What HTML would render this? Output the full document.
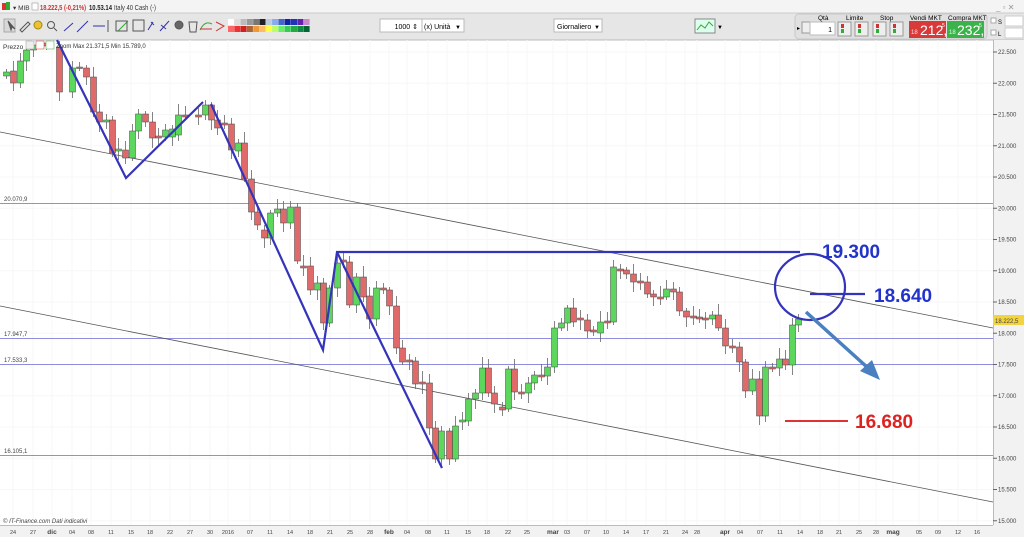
<!DOCTYPE html>
<html><head><meta charset="utf-8"><style>
body{margin:0;width:1024px;height:537px;overflow:hidden;background:#fff;font-family:"Liberation Sans",sans-serif;}
</style></head><body>
<svg id="s" width="1024" height="537" xmlns="http://www.w3.org/2000/svg" style="position:absolute;left:0;top:0;font-family:'Liberation Sans',sans-serif">
<rect x="0" y="0" width="1024" height="13" fill="#f4f4f4"/>
<rect x="0" y="13" width="1024" height="27" fill="#e6e6e6"/>
<line x1="0" y1="13" x2="1024" y2="13" stroke="#ccc"/>
<line x1="0" y1="40" x2="1024" y2="40" stroke="#bbb"/>
<rect x="2" y="3" width="8" height="7" fill="#d33"/><rect x="6" y="2" width="4" height="8" fill="#3a3"/>
<text x="13" y="10" font-size="6.5" fill="#333">▾ MIB</text>
<rect x="32" y="3" width="6" height="7" fill="#fff" stroke="#999" stroke-width=".6"/>
<text x="40" y="10" font-size="7" font-weight="bold" fill="#c33" textLength="46" lengthAdjust="spacingAndGlyphs">18.222,5 (-0,21%)</text>
<text x="89" y="10" font-size="7" font-weight="bold" fill="#222" textLength="23" lengthAdjust="spacingAndGlyphs">10.53.14</text>
<text x="114" y="10" font-size="7" fill="#333" textLength="42" lengthAdjust="spacingAndGlyphs">Italy 40 Cash (-)</text>
<text x="996" y="10" font-size="8" fill="#999">_ ▫ ✕</text>
<g fill="none" stroke="#555" stroke-width="1">
<rect x="4" y="19" width="11" height="13" fill="#d8d8d8" stroke="#aaa"/>
<path d="M8 21 l3 9 1-3 3 2z" fill="#555"/>
<path d="M20 30 l8-8 2 2-8 8z"/>
<circle cx="38" cy="25" r="4" fill="#e9c23a" stroke="#a80"/>
<circle cx="51" cy="25" r="3.5"/><path d="M54 28 l3 3"/>
<path d="M64 31 l9-8" stroke="#33a"/><path d="M77 32 l11-11" stroke="#33a"/>
<path d="M93 26 h12" stroke="#33a"/><path d="M108 20 v12"/>
<path d="M118 31 l10-10" stroke="#3a3"/><rect x="116" y="21" width="11" height="10"/>
<rect x="133" y="20" width="11" height="11"/>
<path d="M148 30 l5-8 M151 22 l3 3" stroke="#33a"/><path d="M160 31 l9-10 M161 25 l5 4" stroke="#33a"/>
<circle cx="179" cy="25" r="4" fill="#666"/><path d="M189 22 h8 l-1 10 h-6z"/>
<path d="M200 30 c4-8 8-8 12-6" stroke="#3a3"/><path d="M200 29 h12" stroke="#c33"/>
<path d="M216 22 l8 4-8 5" stroke="#c33"/>
</g>
<g id="pal"></g>
<rect x="380" y="19" width="42" height="13" fill="#fff" stroke="#bbb"/><text x="418" y="29" font-size="7" text-anchor="end">1000 ⇕</text>
<rect x="422" y="19" width="42" height="13" fill="#fff" stroke="#bbb"/><text x="424" y="29" font-size="7">(x) Unità</text><text x="455" y="29" font-size="6">▼</text>
<rect x="554" y="19" width="48" height="13" fill="#fff" stroke="#bbb"/><text x="557" y="29" font-size="7">Giornaliero</text><text x="594" y="29" font-size="6">▼</text>
<rect x="695" y="19" width="20" height="14" fill="#dfe" stroke="#888"/><path d="M697 30 l4-5 4 3 4-6 4 4" stroke="#3a3" fill="none"/><text x="717" y="29" font-size="6">▼</text>
<rect x="795" y="14" width="192" height="25" rx="4" fill="#e0e0e0" stroke="#c8c8c8"/>
<text x="797" y="30" font-size="6">▸</text><rect x="802" y="22" width="10" height="11" fill="#eee" stroke="#999"/>
<text x="818" y="20" font-size="6.5">Qtà</text><rect x="810" y="22" width="25" height="13" fill="#fff" stroke="#bbb"/><text x="832" y="32" font-size="7" text-anchor="end">1</text>
<text x="846" y="20" font-size="6.5">Limite</text><text x="880" y="20" font-size="6.5">Stop</text>
<g fill="#eee" stroke="#999"><rect x="838" y="22" width="13" height="14"/><rect x="855" y="22" width="13" height="14"/><rect x="873" y="22" width="13" height="14"/><rect x="890" y="22" width="13" height="14"/></g>
<g fill="#c33"><rect x="841" y="24" width="3" height="4"/><rect x="858" y="24" width="3" height="4"/><rect x="876" y="24" width="3" height="4"/><rect x="893" y="24" width="3" height="4"/></g>
<g fill="#3a3"><rect x="841" y="29" width="3" height="4"/><rect x="858" y="29" width="3" height="4"/><rect x="876" y="29" width="3" height="4"/><rect x="893" y="29" width="3" height="4"/></g>
<text x="910" y="20" font-size="6.5">Vendi MKT</text><text x="948" y="20" font-size="6.5">Compra MKT</text>
<rect x="909" y="21" width="37" height="17" fill="#d83a3a"/><text x="911" y="34" font-size="6" fill="#fdd">18</text><text x="920" y="35" font-size="14" fill="#fff">212,</text><text x="942" y="27" font-size="5" fill="#fff">5</text>
<rect x="947" y="21" width="37" height="17" fill="#3bb24a"/><text x="949" y="34" font-size="6" fill="#dfd">18</text><text x="957" y="35" font-size="14" fill="#fff">232,</text><text x="979" y="27" font-size="5" fill="#fff">5</text>
<rect x="991" y="18" width="5" height="5" fill="#fff" stroke="#aaa"/><text x="998" y="24" font-size="6">S</text><rect x="1005" y="16" width="18" height="10" fill="#fff" stroke="#ccc"/>
<rect x="991" y="30" width="5" height="5" fill="#fff" stroke="#aaa"/><text x="998" y="36" font-size="6">L</text><rect x="1005" y="28" width="18" height="10" fill="#fff" stroke="#ccc"/>
<rect x="993" y="40" width="31" height="497" fill="#f2f2f2"/><line x1="993.5" y1="40" x2="993.5" y2="525" stroke="#bbb"/>
<rect x="0" y="525" width="993" height="12" fill="#f2f2f2"/><line x1="0" y1="525.5" x2="993" y2="525.5" stroke="#bbb"/>
<g id="grid"></g>
<g stroke="#6a6ad8" stroke-width="0.8">
<line x1="0" y1="203.5" x2="993" y2="203.5"/><line x1="0" y1="338.5" x2="993" y2="338.5"/>
<line x1="0" y1="364.5" x2="993" y2="364.5"/><line x1="0" y1="455.5" x2="993" y2="455.5"/></g>
<g font-size="6" fill="#444"><text x="4" y="201">20.070,9</text><text x="4" y="336">17.947,7</text><text x="4" y="362">17.533,3</text><text x="4" y="453">16.105,1</text></g>
<g stroke="#555" stroke-width="0.8"><line x1="0" y1="132" x2="993" y2="328"/><line x1="0" y1="306" x2="993" y2="502"/></g>
<g id="c"></g>
<g stroke="#3333bb" stroke-width="2.2" fill="none">
<polyline points="57,40 126,178 203,102"/><polyline points="211,104 323,350 337,252 800,252"/><line x1="337" y1="252" x2="442" y2="468"/>
<ellipse cx="810" cy="287" rx="35" ry="33"/><line x1="810" y1="294" x2="865" y2="294"/></g>
<line x1="785" y1="421" x2="848" y2="421" stroke="#d33" stroke-width="2"/>
<g stroke="#4a7fc0" stroke-width="3.5"><line x1="806" y1="312" x2="868" y2="368"/></g>
<path d="M880 380 L860 371 L872 360 Z" fill="#4a7fc0"/>
<g font-size="19" font-weight="bold"><text x="822" y="258" fill="#2233cc">19.300</text><text x="874" y="302" fill="#2233cc">18.640</text><text x="855" y="428" fill="#dd2222">16.680</text></g>
<text x="3" y="49" font-size="6.5" fill="#333">Prezzo</text>
<rect x="26" y="41" width="8" height="8" fill="#eee" stroke="#999" stroke-width=".5"/><rect x="36" y="41" width="8" height="8" fill="#fff" stroke="#c33" stroke-width=".5"/><rect x="46" y="41" width="8" height="8" fill="#fff" stroke="#3a3" stroke-width=".5"/>
<text x="56" y="48" font-size="6" fill="#333">Zoom Max 21.371,5 Min 15.789,0</text>
<text x="3" y="523" font-size="6" fill="#444" font-style="italic">© IT-Finance.com Dati indicativi</text>
<rect x="993" y="315" width="31" height="10" fill="#f3d43e"/>
<g id="ax" font-size="6" fill="#444"></g>
</svg>
<script>
var NS="http://www.w3.org/2000/svg";
function el(p,t,a,txt){var e=document.createElementNS(NS,t);for(var k in a)e.setAttribute(k,a[k]);if(txt!=null)e.textContent=txt;document.getElementById(p).appendChild(e);}
var cols1=["#fff","#ddd","#bbb","#999","#777","#222","#bcd","#8ae","#46c","#12a","#23b","#62a","#c8c"];
var cols2=["#f66","#e33","#c22","#a63","#e93","#fb6","#ff4","#bf6","#6e6","#3c5","#2a4","#184","#063"];
for(var i=0;i<13;i++){el("pal","rect",{x:228+i*6.3,y:19,width:6,height:6,fill:cols1[i]});el("pal","rect",{x:228+i*6.3,y:26,width:6,height:6,fill:cols2[i]});}
for(var p=15000;p<=22500;p+=500){var y=52+(22500-p)*0.0625;el("ax","line",{x1:993,y1:y,x2:997,y2:y,stroke:"#666"});
el("grid","line",{x1:0,y1:y,x2:993,y2:y,stroke:"#f7f7f7"});
var s=(p/1000).toFixed(3);el("ax","text",{x:998,y:y+2},s);}
el("ax","text",{x:995,y:323,"font-size":"6"},"18.222,5");
var d=[["24",13],["27",33],["dic",52],["04",72],["08",91],["11",111],["15",131],["18",150],["22",170],["27",190],["30",210],["2016",228],["07",250],["11",270],["14",290],["18",310],["21",330],["25",350],["28",370],["feb",389],["04",407],["08",428],["11",447],["15",468],["18",487],["22",508],["25",527],["mar",553],["03",567],["07",587],["10",606],["14",626],["17",646],["21",666],["24",685],["28",697],["apr",725],["04",740],["07",760],["11",780],["14",800],["18",820],["21",839],["25",859],["28",876],["mag",893],["05",919],["09",938],["12",958],["16",977]];
d.forEach(function(a){var b=isNaN(a[0]);el("ax","text",{x:a[1],y:534,"text-anchor":"middle","font-weight":b?"bold":"normal","font-size":b?"6.5":"5.5"},a[0]);
el("grid","line",{x1:a[1],y1:40,x2:a[1],y2:525,stroke:"#f7f7f7"});});
var C=[[6,72,76,1],[13,71,83,0],[20,61,83,1],[26,50,61,1],[33,45,50,1],[46,43,46,0],[59,47,92,0],[72,68,92,1],[79,67,68,0],[86,68,77,0],[93,77,112,0],[99,112,122,0],[106,120,122,1],[112,120,153,0],[118,149,151,1],[125,150,158,0],[132,131,158,1],[138,114,131,1],[145,114,122,0],[152,122,138,0],[158,136,138,0],[165,130,137,1],[172,129,137,1],[178,115,135,1],[185,115,117,0],[198,115,117,0],[205,105,115,1],[211,105,120,0],[217,120,128,0],[224,123,125,0],[231,124,150,0],[238,143,151,1],[244,143,179,0],[251,179,212,0],[257,212,225,0],[264,230,238,0],[270,213,238,1],[277,209,213,1],[283,209,223,0],[290,207,223,1],[297,207,261,0],[303,266,268,0],[310,266,290,0],[317,283,290,1],[323,283,323,0],[329,288,323,1],[337,263,288,1],[343,260,262,0],[349,262,305,0],[356,277,305,1],[363,277,297,0],[369,296,319,0],[376,288,319,1],[383,288,290,0],[389,290,306,0],[396,306,348,0],[402,348,362,0],[409,360,362,0],[415,361,384,0],[422,382,384,0],[429,383,428,0],[435,428,459,0],[441,431,459,1],[449,431,459,0],[455,426,459,1],[462,420,422,1],[468,399,421,1],[475,393,399,1],[482,368,393,1],[488,368,393,0],[494,393,404,0],[502,407,410,0],[508,369,409,1],[514,369,392,0],[521,392,394,0],[528,383,393,1],[534,375,383,1],[541,375,377,0],[547,367,376,1],[554,328,367,1],[561,323,328,1],[567,308,323,1],[573,308,322,0],[580,318,320,0],[587,320,331,0],[593,330,332,0],[600,322,333,1],[607,321,323,0],[613,267,322,1],[620,269,271,0],[626,270,274,0],[633,274,282,0],[640,281,283,0],[647,282,294,0],[653,294,297,0],[660,297,299,0],[666,289,297,1],[673,289,292,0],[679,292,311,0],[686,311,317,0],[693,316,318,0],[699,317,319,0],[705,318,320,0],[712,315,319,1],[718,315,328,0],[725,328,346,0],[732,346,348,0],[739,347,362,0],[745,362,391,0],[752,379,391,1],[759,379,416,0],[765,367,416,1],[772,367,369,0],[779,359,368,1],[785,359,365,0],[792,325,365,1],[798,319,325,1]];
C.forEach(function(c,i){var h=(c[2]-c[1]);var wt=c[1]-3-(i*7%9),wb=c[2]+3+(i*5%8);
el("c","line",{x1:c[0]+.5,y1:Math.max(wt,41),x2:c[0]+.5,y2:wb,stroke:"#666","stroke-width":"0.8"});
el("c","rect",{x:c[0]-2.5,y:Math.max(c[1],41),width:6,height:Math.max(h,1.5),fill:c[3]?"#5cd65c":"#e06a6a",stroke:"#444","stroke-width":"0.5"});});
</script>
</body></html>
